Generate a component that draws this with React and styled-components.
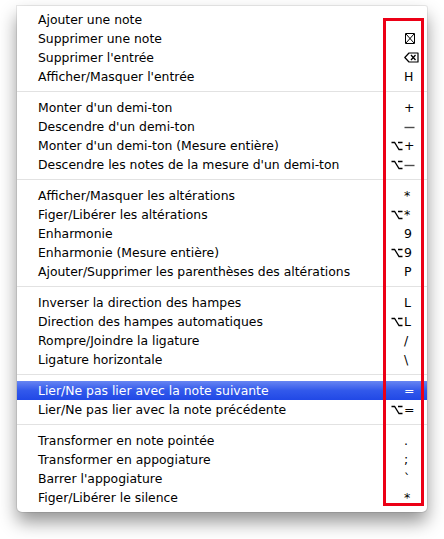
import React from "react";
import styled, { createGlobalStyle } from "styled-components";

const GlobalStyle = createGlobalStyle`
  html, body {
    margin: 0;
    padding: 0;
    background: #ffffff;
  }
  body {
    font-family: "DejaVu Sans", "Liberation Sans", sans-serif;
  }
`;

const Page = styled.div`
  width: 444px;
  height: 539px;
  padding: 6px 0 0 17px;
  box-sizing: border-box;
  position: relative;
`;

const Menu = styled.div`
  width: 410px;
  background: #ffffff;
  border-radius: 0 2px 5px 5px;
  padding: 4px 0 5px 0;
  box-sizing: border-box;
  box-shadow: 0 0 0 1px rgba(0, 0, 0, 0.08), 0 10px 18px rgba(0, 0, 0, 0.42);
`;

const Separator = styled.div`
  height: 1px;
  margin: 5px 0 6px 0;
  background: #e2e2e2;
`;

const Item = styled.div`
  height: 19px;
  display: flex;
  align-items: center;
  padding: 0 8px 0 21px;
  font-size: 12.4px;
  color: ${(p) => (p.active ? "#ffffff" : "#000000")};
  background: ${(p) =>
    p.active ? "linear-gradient(#6785f2, #3259eb 50%, #2148e6)" : "transparent"};
`;

const Label = styled.span`
  flex: 1;
  white-space: nowrap;
`;

const Shortcut = styled.span`
  display: flex;
  align-items: center;
`;

const Mods = styled.span`
  display: flex;
  align-items: center;
  justify-content: flex-end;
  min-width: 16px;
  padding-right: 1px;
`;

const Key = styled.span`
  width: 15px;
  display: flex;
  align-items: center;
  justify-content: flex-start;
  font-size: 12.5px;
`;

const Frame = styled.div`
  position: absolute;
  left: 383px;
  top: 18px;
  width: 41px;
  height: 488px;
  box-sizing: border-box;
  border: 3px solid #ec0016;
  pointer-events: none;
`;

const OptionIcon = () => (
  <svg width="12" height="10" viewBox="0 0 12 10">
    <path
      d="M0.5 1.5 H3.6 L8 8.5 H11.5 M7 1.5 H11.5"
      fill="none"
      stroke="currentColor"
      strokeWidth="1.3"
    />
  </svg>
);

const ClearIcon = () => (
  <svg width="12" height="13" viewBox="0 0 12 13">
    <path
      d="M1.5 1.5 H10.5 M1.5 11.5 H10.5 M1.5 1.5 V11.5 M10.5 1.5 V11.5 M2 2 L10 11 M10 2 L2 11"
      fill="none"
      stroke="currentColor"
      strokeWidth="1"
    />
  </svg>
);

const DeleteIcon = () => (
  <svg width="15" height="11" viewBox="0 0 15 11">
    <path
      d="M5 1 H14 V10 H5 L0.8 5.5 Z"
      fill="none"
      stroke="currentColor"
      strokeWidth="1.2"
      strokeLinejoin="round"
    />
    <path d="M7 3 L11.5 8 M11.5 3 L7 8" stroke="currentColor" strokeWidth="1.3" />
  </svg>
);

const MinusIcon = () => (
  <svg width="11" height="10" viewBox="0 0 11 10">
    <path d="M0.5 5.5 H10.5" stroke="currentColor" strokeOpacity="0.7" strokeWidth="1.4" />
  </svg>
);

const groups = [
  [
    { label: "Ajouter une note" },
    { label: "Supprimer une note", key: <ClearIcon /> },
    { label: "Supprimer l'entrée", key: <DeleteIcon /> },
    { label: "Afficher/Masquer l'entrée", key: "H" },
  ],
  [
    { label: "Monter d'un demi-ton", key: "+" },
    { label: "Descendre d'un demi-ton", key: <MinusIcon /> },
    { label: "Monter d'un demi-ton (Mesure entière)", alt: true, key: "+" },
    { label: "Descendre les notes de la mesure d'un demi-ton", alt: true, key: <MinusIcon /> },
  ],
  [
    { label: "Afficher/Masquer les altérations", key: "*" },
    { label: "Figer/Libérer les altérations", alt: true, key: "*" },
    { label: "Enharmonie", key: "9" },
    { label: "Enharmonie (Mesure entière)", alt: true, key: "9" },
    { label: "Ajouter/Supprimer les parenthèses des altérations", key: "P" },
  ],
  [
    { label: "Inverser la direction des hampes", key: "L" },
    { label: "Direction des hampes automatiques", alt: true, key: "L" },
    { label: "Rompre/Joindre la ligature", key: "/" },
    { label: "Ligature horizontale", key: "\\" },
  ],
  [
    { label: "Lier/Ne pas lier avec la note suivante", key: "=", active: true },
    { label: "Lier/Ne pas lier avec la note précédente", alt: true, key: "=" },
  ],
  [
    { label: "Transformer en note pointée", key: "." },
    { label: "Transformer en appogiature", key: ";" },
    { label: "Barrer l'appogiature", key: "`" },
    { label: "Figer/Libérer le silence", key: "*" },
  ],
];

const App = () => {
  return (
    <React.Fragment>
      <GlobalStyle />
      <Page>
        <Menu>
          {groups.map((group, gi) => (
            <React.Fragment key={gi}>
              {gi > 0 && <Separator />}
              {group.map((item) => (
                <Item key={item.label} active={item.active}>
                  <Label>{item.label}</Label>
                  <Shortcut>
                    <Mods>{item.alt && <OptionIcon />}</Mods>
                    <Key>{item.key}</Key>
                  </Shortcut>
                </Item>
              ))}
            </React.Fragment>
          ))}
        </Menu>
        <Frame />
      </Page>
    </React.Fragment>
  );
};

export default App;
